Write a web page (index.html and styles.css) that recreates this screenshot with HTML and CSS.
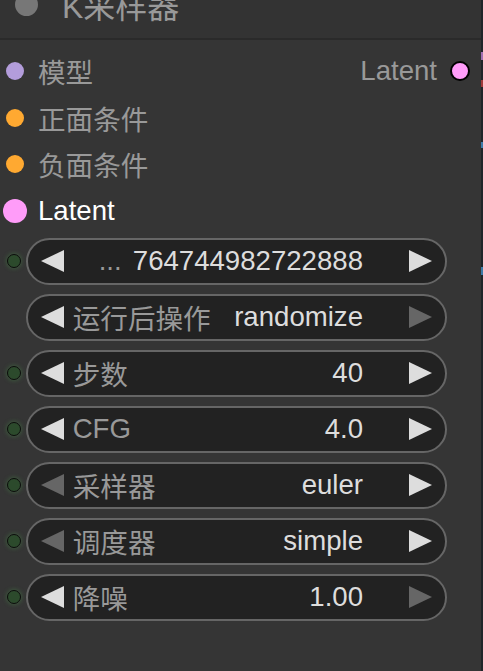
FILE: index.html
```html
<!DOCTYPE html>
<html lang="zh">
<head>
<meta charset="utf-8">
<title>K采样器</title>
<link rel="stylesheet" href="styles.css">
</head>
<body>
<div class="canvas">
  <div class="node">
    <div class="title">
      <div class="title-inner">
        <span class="title-dot"></span>
        <span class="title-text">K采样器</span>
      </div>
    </div>
    <div class="io">
      <div class="io-row">
        <div class="in"><span class="slot-box"><span class="slot slot-model"></span></span><span class="in-label">模型</span></div>
        <div class="out"><span class="out-label">Latent</span><span class="slot slot-out"></span></div>
      </div>
      <div class="io-row">
        <div class="in"><span class="slot-box"><span class="slot slot-cond"></span></span><span class="in-label">正面条件</span></div>
      </div>
      <div class="io-row">
        <div class="in"><span class="slot-box"><span class="slot slot-cond"></span></span><span class="in-label">负面条件</span></div>
      </div>
      <div class="io-row">
        <div class="in"><span class="slot-box"><span class="slot slot-latent"></span></span><span class="in-label in-label-active">Latent</span></div>
      </div>
    </div>
    <div class="widgets">
      <div class="w-row">
        <span class="w-slot"></span>
        <div class="pill">
          <svg class="arrow on" viewBox="0 0 23 22"><polygon points="0,11 23,0 23,22"/></svg>
          <span class="label label-seed">...</span>
          <span class="value">764744982722888</span>
          <svg class="arrow on" viewBox="0 0 23 22"><polygon points="0,0 23,11 0,22"/></svg>
        </div>
      </div>
      <div class="w-row">
        <span class="w-slot hidden"></span>
        <div class="pill">
          <svg class="arrow on" viewBox="0 0 23 22"><polygon points="0,11 23,0 23,22"/></svg>
          <span class="label">运行后操作</span>
          <span class="value">randomize</span>
          <svg class="arrow off" viewBox="0 0 23 22"><polygon points="0,0 23,11 0,22"/></svg>
        </div>
      </div>
      <div class="w-row">
        <span class="w-slot"></span>
        <div class="pill">
          <svg class="arrow on" viewBox="0 0 23 22"><polygon points="0,11 23,0 23,22"/></svg>
          <span class="label">步数</span>
          <span class="value">40</span>
          <svg class="arrow on" viewBox="0 0 23 22"><polygon points="0,0 23,11 0,22"/></svg>
        </div>
      </div>
      <div class="w-row">
        <span class="w-slot"></span>
        <div class="pill">
          <svg class="arrow on" viewBox="0 0 23 22"><polygon points="0,11 23,0 23,22"/></svg>
          <span class="label">CFG</span>
          <span class="value">4.0</span>
          <svg class="arrow on" viewBox="0 0 23 22"><polygon points="0,0 23,11 0,22"/></svg>
        </div>
      </div>
      <div class="w-row">
        <span class="w-slot"></span>
        <div class="pill">
          <svg class="arrow off" viewBox="0 0 23 22"><polygon points="0,11 23,0 23,22"/></svg>
          <span class="label">采样器</span>
          <span class="value">euler</span>
          <svg class="arrow on" viewBox="0 0 23 22"><polygon points="0,0 23,11 0,22"/></svg>
        </div>
      </div>
      <div class="w-row">
        <span class="w-slot"></span>
        <div class="pill">
          <svg class="arrow off" viewBox="0 0 23 22"><polygon points="0,11 23,0 23,22"/></svg>
          <span class="label">调度器</span>
          <span class="value">simple</span>
          <svg class="arrow on" viewBox="0 0 23 22"><polygon points="0,0 23,11 0,22"/></svg>
        </div>
      </div>
      <div class="w-row">
        <span class="w-slot"></span>
        <div class="pill">
          <svg class="arrow on" viewBox="0 0 23 22"><polygon points="0,11 23,0 23,22"/></svg>
          <span class="label">降噪</span>
          <span class="value">1.00</span>
          <svg class="arrow off" viewBox="0 0 23 22"><polygon points="0,0 23,11 0,22"/></svg>
        </div>
      </div>
    </div>
  </div>
  <div class="links">
    <span class="stub stub-purple"></span>
    <span class="stub stub-red"></span>
    <span class="stub stub-blue1"></span>
    <span class="stub stub-blue2"></span>
  </div>
</div>
</body>
</html>
```
FILE: styles.css
```css
html, body {
  margin: 0;
  padding: 0;
  background: #353535;
}
body {
  font-family: "Liberation Sans", "Noto Sans CJK SC", sans-serif;
  font-size: 27.6px;
}
.canvas {
  display: flex;
  height: 671px;
  overflow: hidden;
}
.node {
  width: 481px;
  flex: none;
  background: #353535;
}
.links {
  position: relative;
  width: 2px;
  flex: none;
  background: #1f2529;
}
.stub {
  position: absolute;
  left: 0;
  width: 2px;
}
.stub-purple { top: 52px; height: 8px; background: #a070b0; }
.stub-red { top: 80px; height: 7px; background: #a03b3b; }
.stub-blue1 { top: 142px; height: 6px; background: #3c7aa8; }
.stub-blue2 { top: 267px; height: 8px; background: #3c7aa8; }

/* title */
.title {
  height: 38px;
  background: #333333;
  border-bottom: 2px solid #2a2a2a;
  overflow: hidden;
}
.title-inner {
  display: flex;
  align-items: center;
  height: 40px;
  margin-top: -16px;
  padding-left: 15px;
  gap: 24px;
}
.title-dot {
  width: 23px;
  height: 23px;
  border-radius: 50%;
  background: #777777;
  flex: none;
}
.title-text {
  font-size: 32px;
  color: #999999;
}

/* inputs / outputs */
.io {
  padding-top: 8px;
}
.io-row {
  display: flex;
  align-items: center;
  justify-content: space-between;
  height: 46.6px;
}
.in {
  display: flex;
  align-items: center;
}
.slot-box {
  width: 30px;
  display: flex;
  justify-content: center;
  align-items: center;
}
.slot {
  display: block;
  border-radius: 50%;
  flex: none;
}
.slot-model { width: 18px; height: 18px; background: #b39ddb; }
.slot-cond { width: 18px; height: 18px; background: #ffa931; }
.slot-latent { width: 24px; height: 24px; background: #ff9cf9; }
.slot-out {
  width: 20px;
  height: 20px;
  box-sizing: border-box;
  background: #ff9cf9;
  border: 2px solid #000;
}
.in-label {
  margin-left: 8px;
  color: #999999;
}
.in-label-active {
  color: #ffffff;
}
.out {
  display: flex;
  align-items: center;
  gap: 13px;
  padding-right: 11px;
}
.out-label {
  color: #999999;
}

/* widgets */
.widgets {
  display: flex;
  flex-direction: column;
  gap: 9px;
  padding-top: 3.6px;
}
.w-row {
  display: flex;
  align-items: center;
  gap: 5px;
  padding-left: 7px;
}
.w-slot {
  width: 14px;
  height: 14px;
  box-sizing: border-box;
  border-radius: 50%;
  background: #2c4a2c;
  border: 1.5px solid #0c0c0c;
  box-shadow: 0 0 5px rgba(80, 170, 80, 0.45);
  flex: none;
}
.w-slot.hidden {
  visibility: hidden;
}
.pill {
  width: 421px;
  height: 47px;
  box-sizing: border-box;
  border: 2px solid #666666;
  border-radius: 24px;
  background: #222222;
  display: flex;
  align-items: center;
  padding: 0 13px 0 12.7px;
}
.arrow {
  width: 23px;
  height: 22px;
  flex: none;
}
.arrow.on { fill: #dddddd; }
.arrow.off { fill: #666666; }
.label {
  margin-left: 9px;
  color: #999999;
  white-space: nowrap;
}
.label-seed {
  margin-left: 35px;
}
.value {
  margin-left: auto;
  margin-right: 46px;
  color: #dddddd;
  white-space: nowrap;
}
```
